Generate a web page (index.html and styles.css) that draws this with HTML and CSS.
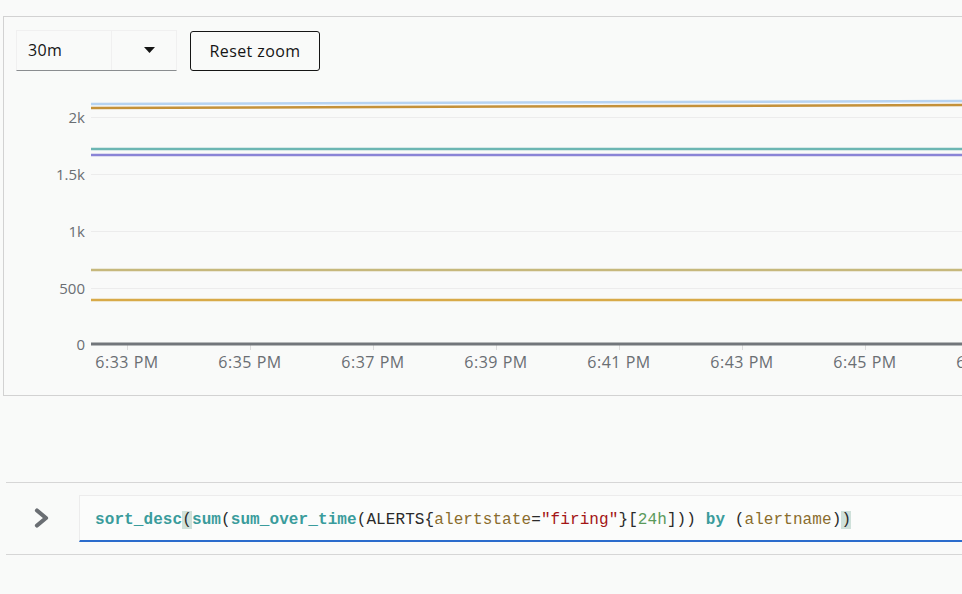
FILE: index.html
```html
<!DOCTYPE html>
<html>
<head>
<meta charset="utf-8">
<link rel="stylesheet" href="styles.css">
</head>
<body>
<div class="page">
  <div class="panel">
    <div class="toolbar">
      <div class="range-select">
        <span class="range-value">30m</span>
        <span class="range-toggle">
          <svg width="11" height="6" viewBox="0 0 11 6"><path d="M0 0h11L5.5 6z" fill="#151515"/></svg>
        </span>
      </div>
      <button class="reset-btn">Reset zoom</button>
    </div>
    <svg class="chart" width="959" height="300" viewBox="0 0 959 300">
      <g class="grid" stroke="#ececec" stroke-width="1">
        <line x1="87" y1="37.5" x2="959" y2="37.5"/>
        <line x1="87" y1="94.5" x2="959" y2="94.5"/>
        <line x1="87" y1="151.5" x2="959" y2="151.5"/>
        <line x1="87" y1="208.5" x2="959" y2="208.5"/>
      </g>
      <g class="ylabels" text-anchor="end">
        <text x="81" y="43">2k</text>
        <text x="81" y="100">1.5k</text>
        <text x="81" y="157">1k</text>
        <text x="81" y="214">500</text>
        <text x="81" y="270">0</text>
      </g>
      <g fill="none" stroke-width="2.5">
        <path d="M87 24 L959 21" stroke="#b6d3f2"/>
        <path d="M87 28 L959 25" stroke="#c4913a"/>
        <path d="M87 69 L959 69" stroke="#6cb6b3"/>
        <path d="M87 75 L959 75" stroke="#8a84d6"/>
        <path d="M87 190 L959 190" stroke="#c6b87c"/>
        <path d="M87 220 L959 220" stroke="#d8aa48"/>
      </g>
      <g stroke="#dcdcdc" stroke-width="1">
        <line x1="123.5" y1="265" x2="123.5" y2="270"/>
        <line x1="246.5" y1="265" x2="246.5" y2="270"/>
        <line x1="369.5" y1="265" x2="369.5" y2="270"/>
        <line x1="492.5" y1="265" x2="492.5" y2="270"/>
        <line x1="615.5" y1="265" x2="615.5" y2="270"/>
        <line x1="738.5" y1="265" x2="738.5" y2="270"/>
        <line x1="861.5" y1="265" x2="861.5" y2="270"/>
      </g>
      <line x1="87" y1="264" x2="959" y2="264" stroke="#72767b" stroke-width="3"/>
      <g class="xlabels" text-anchor="middle">
        <text x="123" y="288">6:33 PM</text>
        <text x="246" y="288">6:35 PM</text>
        <text x="369" y="288">6:37 PM</text>
        <text x="492" y="288">6:39 PM</text>
        <text x="615" y="288">6:41 PM</text>
        <text x="738" y="288">6:43 PM</text>
        <text x="861" y="288">6:45 PM</text>
        <text x="984" y="288">6:47 PM</text>
      </g>
    </svg>
  </div>

  <div class="query-row">
    <span class="chevron">
      <svg width="16" height="20" viewBox="0 0 16 20"><path d="M3 2.5 L12 10 L3 17.5" fill="none" stroke="#6a6e73" stroke-width="4.2" stroke-linejoin="round" stroke-linecap="round"/></svg>
    </span>
    <div class="query-input">
      <code class="expr"><span class="fn">sort_desc</span><span class="match">(</span><span class="fn">sum</span>(<span class="fn">sum_over_time</span>(ALERTS{<span class="label">alertstate</span>=<span class="str">"firing"</span>}[<span class="num">24h</span>])) <span class="fn">by</span> (<span class="label">alertname</span>)<span class="match">)</span></code>
    </div>
  </div>
</div>
</body>
</html>
```

FILE: styles.css
```css
html, body {
  margin: 0;
  padding: 0;
  background: #f9faf9;
  overflow: hidden;
}
body {
  width: 962px;
  height: 594px;
  font-family: "Open Sans", "Noto Sans", sans-serif;
  color: #151515;
}
.page {
  padding-top: 16px;
}
.panel {
  margin-left: 3px;
  width: 1000px;
  border: 1px solid #d2d2d2;
  border-right: none;
  padding: 13px 0 0 12px;
  box-sizing: border-box;
  height: 380px;
  overflow: hidden;
}
.toolbar {
  display: flex;
  align-items: flex-start;
  gap: 13px;
  height: 42px;
}
.range-select {
  display: flex;
  height: 41px;
  box-sizing: border-box;
  border: 1px solid #f0f0f0;
  border-bottom-color: #8a8d90;
}
.range-value {
  width: 95px;
  box-sizing: border-box;
  padding-left: 11px;
  font-size: 16px;
  letter-spacing: 0.4px;
  line-height: 39px;
  border-right: 1px solid #f0f0f0;
}
.range-toggle {
  width: 64px;
  display: flex;
  align-items: center;
  justify-content: center;
  padding-left: 10px;
  padding-bottom: 1px;
  box-sizing: border-box;
}
.reset-btn {
  height: 40px;
  margin-top: 1px;
  width: 130px;
  border: 1px solid #151515;
  border-radius: 3px;
  background: transparent;
  font-family: "Open Sans", "Noto Sans", sans-serif;
  font-size: 16px;
  letter-spacing: 0.4px;
  color: #151515;
  padding: 0;
}
.chart {
  display: block;
  margin-left: -12px;
  margin-top: 8px;
  font-family: "Open Sans", "Noto Sans", sans-serif;
  font-size: 15px;
}
.chart text {
  fill: #6a6e73;
}
.chart .xlabels text {
  font-size: 16px;
  letter-spacing: 0.5px;
}
.query-row {
  margin-top: 86px;
  margin-left: 6px;
  border-top: 1px solid #d6d6d6;
  border-bottom: 1px solid #d6d6d6;
  padding: 12px 0 12px 0;
  display: flex;
  align-items: center;
}
.chevron {
  width: 73px;
  display: flex;
  justify-content: flex-start;
  padding-left: 28px;
  box-sizing: border-box;
  padding-bottom: 2px;
}
.query-input {
  flex: 1;
  height: 47px;
  box-sizing: border-box;
  border: 1px solid #ececec;
  border-right: none;
  border-bottom: 2px solid #2b6ccc;
  background: #fbfcfb;
  padding-left: 15px;
  display: flex;
  align-items: center;
  padding-top: 3px;
}
.expr {
  font-family: "Liberation Mono", "DejaVu Sans Mono", monospace;
  font-size: 16px;
  letter-spacing: 0.09px;
  color: #2a2a2a;
  white-space: pre;
}
.fn {
  color: #3a9c9c;
  font-weight: bold;
}
.label {
  color: #8a6d2e;
}
.str {
  color: #a31515;
}
.num {
  color: #5a9a5a;
}
.match {
  background: #cfe1da;
}
```
